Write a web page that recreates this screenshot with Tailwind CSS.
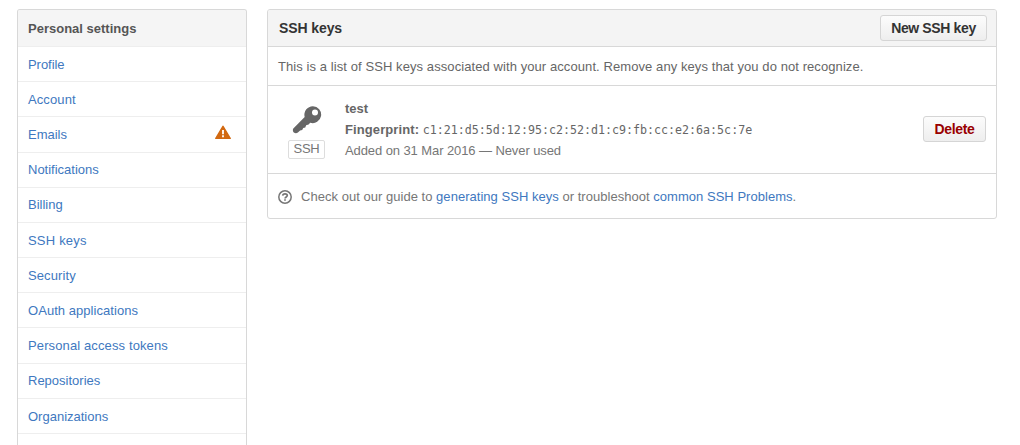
<!DOCTYPE html>
<html lang="en">
<head>
<meta charset="utf-8">
<title>SSH keys</title>
<script src="https://cdn.jsdelivr.net/npm/@tailwindcss/browser@4"></script>
</head>
<body class="h-[445px] overflow-hidden bg-white text-[13px] leading-[20px] text-[#666] font-['Liberation_Sans',Arial,sans-serif]">
<div class="flex h-[445px] items-start gap-[20px] overflow-hidden pl-[17px] pt-[9px]">
  <nav class="w-[230px] h-[436px] shrink-0 rounded-t-[3px] border border-b-0 border-[#d8d8d8] overflow-hidden text-[#4078c0]">
    <h2 class="h-[37px] border-b border-[#eee] bg-[#f5f5f5] px-[10px] pt-[9px] font-bold text-[#555] leading-[19px]">Personal settings</h2>
    <a class="block h-[35.18px] border-b border-[#eee] px-[10px] pt-[7.75px] tracking-[-0.05px]">Profile</a>
    <a class="block h-[35.18px] border-b border-[#eee] px-[10px] pt-[7.75px] tracking-[0.1px]">Account</a>
    <a class="flex justify-between h-[35.18px] border-b border-[#eee] pl-[10px] pr-[15px] pt-[7.75px]">Emails
      <svg class="h-4 w-4" viewBox="0 0 16 16" fill="#d26911"><path fill-rule="evenodd" d="M7.2 1.2q.8-1.2 1.6 0l7 11.8q.5 1-.8 1.1H1q-1.3-.1-.8-1.1zM7.1 5v4.2h1.8V5zM7.1 10.3v1.9h1.8v-1.9z"/></svg>
    </a>
    <a class="block h-[35.18px] border-b border-[#eee] px-[10px] pt-[7.75px]">Notifications</a>
    <a class="block h-[35.18px] border-b border-[#eee] px-[10px] pt-[7.75px]">Billing</a>
    <a class="block h-[35.18px] border-b border-[#eee] px-[10px] pt-[7.75px] tracking-[0.2px]">SSH keys</a>
    <a class="block h-[35.18px] border-b border-[#eee] px-[10px] pt-[7.75px] tracking-[0.1px]">Security</a>
    <a class="block h-[35.18px] border-b border-[#eee] px-[10px] pt-[7.75px] tracking-[0.05px]">OAuth applications</a>
    <a class="block h-[35.18px] border-b border-[#eee] px-[10px] pt-[7.75px] tracking-[0.12px]">Personal access tokens</a>
    <a class="block h-[35.18px] border-b border-[#eee] px-[10px] pt-[7.75px]">Repositories</a>
    <a class="block h-[35.18px] border-b border-[#eee] px-[10px] pt-[8px]">Organizations</a>
  </nav>
  <main class="w-[730px] h-[210px] shrink-0 rounded-[3px] border border-[#d8d8d8] overflow-hidden">
    <header class="flex h-[37px] items-center justify-between border-b border-[#d8d8d8] bg-[#f4f4f4] pl-[11px] pr-[9px]">
      <h1 class="text-[14px] font-bold tracking-[-0.1px] text-[#333]">SSH keys</h1>
      <button class="h-[26px] w-[107px] rounded-[3px] border border-[#d5d5d5] bg-linear-to-b from-[#fcfcfc] to-[#eee] text-[14px] tracking-[-0.37px] font-bold leading-[24px] text-[#333] whitespace-nowrap">New SSH key</button>
    </header>
    <p class="h-[39px] border-b border-[#d8d8d8] px-[10px] pt-[10px] tracking-[0.082px] whitespace-nowrap">This is a list of SSH keys associated with your account. Remove any keys that you do not recognize.</p>
    <section class="flex h-[88px] border-b border-[#d8d8d8] pr-[10px]">
      <div class="ml-[20px] flex w-[37px] flex-col items-center pt-[19px]">
        <svg class="h-[30px] w-[30px]" viewBox="0 0 30 30" fill="#666"><path fill-rule="evenodd" d="M20.9 1.3a8.4 8.4 0 1 1-2.7 16.4l-1.6 1.9-2.5.7-.8 2.1-2.1.6-1 2-2.1.5-2.2 2.1q-2.1 1.2-4.1-.1-1.6-1.8-.5-3.9L12.7 12A8.4 8.4 0 0 1 20.9 1.3zM23 4.6a3 3 0 1 0 0 6 3 3 0 0 0 0-6z"/></svg>
        <span class="mt-[5px] h-[19px] w-[37px] rounded-[2px] border border-[#ddd] text-center leading-[16px] tracking-[-0.3px] text-[#767676]">SSH</span>
      </div>
      <div class="ml-[20px] grow pt-[12px] leading-[21px]">
        <div class="font-bold">test</div>
        <div class="whitespace-nowrap"><b class="tracking-[0.1px]">Fingerprint:</b> <code class="font-['DejaVu_Sans_Mono',monospace] text-[11.65px]">c1:21:d5:5d:12:95:c2:52:d1:c9:fb:cc:e2:6a:5c:7e</code></div>
        <div class="leading-[20px] tracking-[-0.09px] text-[#767676]">Added on 31 Mar 2016 — Never used</div>
      </div>
      <button class="mt-[30px] h-[26px] w-[63px] rounded-[3px] border border-[#d5d5d5] bg-linear-to-b from-[#fcfcfc] to-[#eee] text-[14px] tracking-[-0.3px] font-bold leading-[24px] text-[#900]">Delete</button>
    </section>
    <p class="flex h-[44px] items-center pl-[10px] pt-[2px] text-[#767676] whitespace-nowrap">
      <svg class="mr-[9px] h-[14px] w-[14px]" viewBox="0 0 14 14" fill="none" stroke="#767676"><circle cx="7" cy="7" r="6.2" stroke-width="1.5"/><path stroke-width="1.7" d="M4.7 5.6C4.8 4.4 5.7 3.8 7 3.8s2.3.7 2.3 1.8c0 1.4-2.2 1.4-2.2 2.8"/><path stroke-width="1.7" d="M7 9.3v1.5"/></svg>
      <span class="tracking-[0.03px]">Check out our guide to <a class="text-[#4078c0]">generating SSH keys</a> or troubleshoot <a class="text-[#4078c0]">common SSH Problems</a>.</span>
    </p>
  </main>
</div>
</body>
</html>
